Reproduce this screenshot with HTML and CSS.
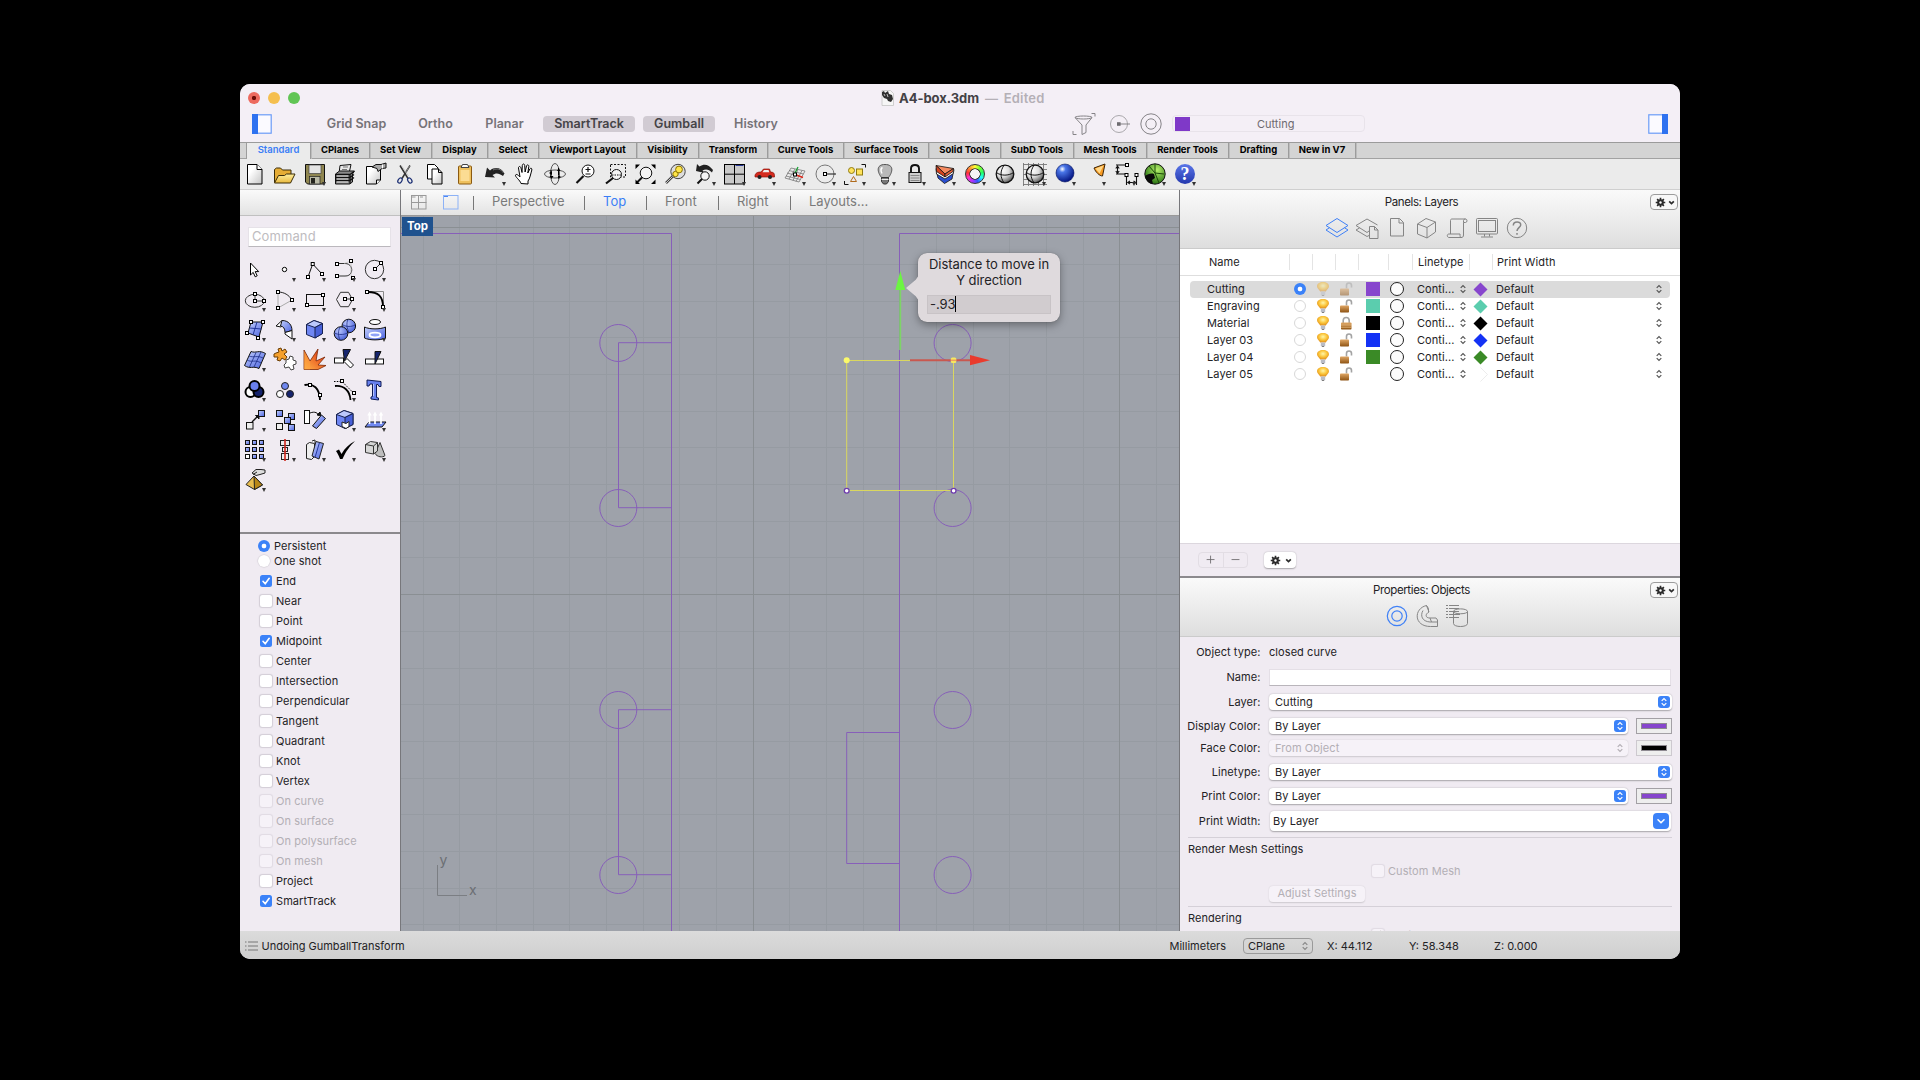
FILE: index.html
```html
<!DOCTYPE html>
<html lang="en">
<head>
<meta charset="utf-8">
<title>A4-box.3dm</title>
<link rel="stylesheet" href="styles.css">
</head>
<body>
<svg class="defs" width="0" height="0">
  <defs>
    <linearGradient id="paper" x1="0" y1="0" x2="1" y2="1"><stop offset="0.3" stop-color="#fff"/><stop offset="1" stop-color="#c4c4c4"/></linearGradient>
    <linearGradient id="blue" x1="0" y1="0" x2="1" y2="1"><stop offset="0" stop-color="#c3cffc"/><stop offset="1" stop-color="#4a62e0"/></linearGradient>
    <linearGradient id="gold" x1="0" y1="0" x2="0" y2="1"><stop offset="0" stop-color="#fff0a0"/><stop offset="1" stop-color="#e8b83c"/></linearGradient>
    <linearGradient id="fire" x1="1" y1="0" x2="0" y2="1"><stop offset="0.3" stop-color="#e8501c"/><stop offset="1" stop-color="#ffb54a"/></linearGradient>
    <linearGradient id="brass" x1="0" y1="0" x2="0" y2="1"><stop offset="0" stop-color="#e0a765"/><stop offset="1" stop-color="#8e5313"/></linearGradient>
    <radialGradient id="ball" cx="0.35" cy="0.3" r="0.75"><stop offset="0" stop-color="#fff"/><stop offset="0.5" stop-color="#ddd"/><stop offset="1" stop-color="#555"/></radialGradient>
    <radialGradient id="blueball" cx="0.35" cy="0.28" r="0.75"><stop offset="0" stop-color="#fff"/><stop offset="0.25" stop-color="#4a76e8"/><stop offset="1" stop-color="#02127e"/></radialGradient>
    <radialGradient id="softball" cx="0.35" cy="0.3" r="0.8"><stop offset="0" stop-color="#b9c6fb"/><stop offset="1" stop-color="#3e57d6"/></radialGradient>
    <radialGradient id="greenball" cx="0.6" cy="0.3" r="0.75"><stop offset="0" stop-color="#b4f06a"/><stop offset="1" stop-color="#1e6a0c"/></radialGradient>
    <radialGradient id="glow" cx="0.5" cy="0.4" r="0.6"><stop offset="0" stop-color="#fff6a8"/><stop offset="0.55" stop-color="#fbc53a"/><stop offset="1" stop-color="#e08e1c"/></radialGradient>
  </defs>
  <symbol id="h" viewBox="0 0 4 4" overflow="visible"><rect x="-1.5" y="-1.5" width="3" height="3" fill="#fff" stroke="#000"/></symbol>
  <symbol id="bulb" viewBox="0 0 14 16"><path d="M7 1c3.600 0 6 1.800 6 4.300 0 2.200-2.400 3.300-3.200 5.200H4.200C3.400 8.600 1 7.500 1 5.300 1 2.800 3.400 1 7 1z" fill="url(#glow)"/><rect x="4.800" y="10.500" width="4.400" height="3.600" fill="#b9bcc6"/><path d="M5.500 14.100h3l-.8 1h-1.400z" fill="#777"/></symbol>
  <symbol id="unlocked" viewBox="0 0 14 16"><path d="M7.500 7.500V4.500c0-3.300 5-3.300 5 0v2" fill="none" stroke="#a3a3a3" stroke-width="1.600"/><rect x="1" y="7.500" width="9" height="7" rx=".8" fill="url(#brass)"/></symbol>
  <symbol id="locked" viewBox="0 0 14 16"><path d="M4.200 8V5.500c0-4 6-4 6 0V8" fill="none" stroke="#a3a3a3" stroke-width="1.600"/><rect x="2" y="7.500" width="10.500" height="7" rx=".8" fill="url(#brass)"/><path d="M2 10h10.500M2 12.300h10.500" stroke="#f0c890" stroke-width=".6"/></symbol>
  <symbol id="updown" viewBox="0 0 8 10"><path d="M1.700 3.800 4 1.500l2.300 2.300M1.700 6.200 4 8.500l2.300-2.300" fill="none" stroke="currentColor" stroke-width="1.200"/></symbol>
  <symbol id="gear" viewBox="0 0 12 12"><path d="M6 .8v10.400M.8 6h10.400M2.300 2.300l7.400 7.400M9.700 2.300 2.300 9.700" stroke="#2b2b2b" stroke-width="1.800"/><circle cx="6" cy="6" r="2.600" fill="none" stroke="#2b2b2b" stroke-width="2"/><circle cx="6" cy="6" r="1.300" fill="#fff"/></symbol>
  <symbol id="chev" viewBox="0 0 6 6"><path d="M1 2l2 2 2-2" fill="none" stroke="#2b2b2b" stroke-width="1.400"/></symbol>
  <symbol id="tick" viewBox="0 0 12 12"><path d="M3 6.300 5.200 8.800 9.200 3.300" fill="none" stroke="#fff" stroke-width="1.600" stroke-linecap="round" stroke-linejoin="round"/></symbol>
</svg>

<main class="window">
  <header class="titlebar">
    <div class="lights"><i class="red"></i><i class="amber"></i><i class="green"></i></div>
    <div class="doc-title">
      <svg width="13" height="16" viewBox="0 0 13 16"><path d="M1 .5h8.500l3 3v12H1z" fill="#f6f6f6" stroke="#c4c4c4" stroke-width=".8"/><path d="M1 2l2-1 1 2 3-2 1 3 3 1 1 4-2 3-3-1-1-2-3-1-2-3z" fill="#303030"/><path d="M3 4l1 2M6 4l1 3" stroke="#ddd" stroke-width=".8"/></svg>
      <b>A4-box.3dm</b><span>— Edited</span>
    </div>
    <svg class="side-left" width="20" height="20" viewBox="0 0 20 20"><rect x=".8" y=".8" width="18.400" height="18.400" fill="#fbfaff" stroke="#6b9cf7" stroke-width="1.200"/><rect width="6" height="20" fill="#2f72f0"/></svg>
    <nav class="modes">
      <span class="grid-snap">Grid Snap</span><span class="ortho">Ortho</span><span class="planar">Planar</span><span class="smart on">SmartTrack</span><span class="gumball on">Gumball</span><span class="history">History</span>
    </nav>
    <div class="layer-tools">
      <svg width="24" height="23" viewBox="0 0 24 23" fill="none" stroke="#858387"><path d="M3 4.500c0-2 17-2 17 0l-6 7.500v7.500l-4 2v-9.500zM3 4.500c2 2 15 2 17 0"/><path d="M19.500.5h3.500v3M1 18v3.500h3.500"/></svg>
      <svg width="20" height="20" viewBox="0 0 20 20" fill="none" stroke="#aaa8ac"><circle cx="9" cy="10" r="8.500"/><path d="M10 10h10" stroke="#858387"/><rect x="7" y="8.200" width="3.600" height="3.600" fill="#6e6c70" stroke="none"/></svg>
      <svg width="22" height="22" viewBox="0 0 22 22" fill="none" stroke="#858387"><circle cx="11" cy="11" r="10.200"/><circle cx="11" cy="11" r="5.200"/></svg>
    </div>
    <div class="current-layer"><i></i><span>Cutting</span></div>
    <svg class="side-right" width="20" height="20" viewBox="0 0 20 20"><rect x=".8" y=".8" width="18.400" height="18.400" fill="#fbfaff" stroke="#6b9cf7" stroke-width="1.200"/><rect x="14" width="6" height="20" fill="#2f72f0"/></svg>
  </header>

  <nav class="tabs">
    <span class="active" style="width:65px">Standard</span><span style="width:59px">CPlanes</span><span style="width:62px">Set View</span><span style="width:56px">Display</span><span style="width:51px">Select</span><span style="width:98px">Viewport Layout</span><span style="width:62px">Visibility</span><span style="width:69px">Transform</span><span style="width:76px">Curve Tools</span><span style="width:85px">Surface Tools</span><span style="width:72px">Solid Tools</span><span style="width:73px">SubD Tools</span><span style="width:73px">Mesh Tools</span><span style="width:82px">Render Tools</span><span style="width:60px">Drafting</span><span style="width:67px">New in V7</span>
  </nav>

  <div class="toolbar">
    <i><svg viewBox="0 0 30 30"><path d="M7.500 5.500h9.500l5 5V25h-14.500z" fill="url(#paper)" stroke="#000"/><path d="M17 5.500v5h5" fill="#fff" stroke="#000"/></svg></i>
    <i><svg viewBox="0 0 30 30"><path d="M4.500 23.500V10.500l2-1.500h4l2 2h8.500v4" fill="#e6ad35" stroke="#3a2c08"/><path d="M4.500 24l4-7.500h6l2-1.500h8.500L20.500 24z" fill="url(#gold)" stroke="#3a2c08"/></svg></i>
    <i class="more"><svg viewBox="0 0 30 30"><path d="M5.500 5.500h19V25H7.500l-2-2z" fill="#8f8650" stroke="#111"/><rect x="9" y="6" width="12" height="8.500" fill="#e4e4e4" stroke="#444" stroke-width=".7"/><rect x="9.500" y="17.500" width="10.500" height="7.500" fill="#b9b9a6" stroke="#222" stroke-width=".7"/><rect x="11" y="19" width="4" height="5.500" fill="#23231d"/></svg></i>
    <i><svg viewBox="0 0 30 30"><path d="M10 6.500l11-1-2 9H9z" fill="#e8e8e8" stroke="#111"/><path d="M13 8h5M12 10.500h5" stroke="#777"/><path d="M5.500 15l4-3h15l-2 3v8l-3 2h-14z" fill="#8a8a8a" stroke="#111"/><path d="M5.500 15.500H20v9.500M5.500 18.500H20M5.500 21.500H20M20 15.500l4-3M20 18.500l4-3M20 21.500l4-3" fill="none" stroke="#111" stroke-width="1.300"/><path d="M7 17h11M7 20h11M7 23h11" stroke="#e2e2e2"/></svg></i>
    <i><svg viewBox="0 0 30 30"><path d="M6.500 7.500h14V21l-4 4h-10z" fill="url(#paper)" stroke="#000"/><path d="M16.500 25v-4h4" fill="#fff" stroke="#000"/><path d="M12 8l4-2.500h5L26 4v5l-4 .5-4 3-1-3z" fill="#aaa" stroke="#111"/><path d="M22.500 5.500v4" stroke="#fff"/></svg></i>
    <i><svg viewBox="0 0 30 30" fill="none"><path d="M10 6.500l8 13M20 6.500l-8 13" stroke="#333" stroke-width="1.500"/><path d="M18.500 17l-7-10.500M19.500 7l-4 7" stroke="#bbb" stroke-width=".6"/><ellipse cx="10" cy="21.500" rx="1.800" ry="2.800" transform="rotate(35 10 21.500)" stroke="#1c2f74" stroke-width="1.200"/><ellipse cx="19.800" cy="21.500" rx="1.800" ry="2.800" transform="rotate(-35 19.800 21.500)" stroke="#1c2f74" stroke-width="1.200"/></svg></i>
    <i><svg viewBox="0 0 30 30" stroke="#000"><path d="M7.500 5.500h7l3.500 3.500V20h-10.500z" fill="#fff"/><path d="M12 10h6.500l3.500 3.500V25H12z" fill="url(#paper)"/><path d="M18.500 10v3.500h3.500" fill="none"/></svg></i>
    <i><svg viewBox="0 0 30 30"><rect x="8.500" y="7" width="13" height="18" rx="1" fill="#eec05d" stroke="#8a5a12"/><path d="M11 8.500l1.500-3h5l1.500 3z" fill="#f8f8f8" stroke="#444"/><path d="M10.500 11h9v11h-9z" fill="#fbdc93"/></svg></i>
    <i class="more"><svg viewBox="0 0 30 30"><path d="M5 18l2-9.500 3 3c5-4 11-3 14.500 3l-1.500 2.500c-4-3-7-3.500-10.500-1l2.500 2.500z" fill="#222"/><path d="M13 11c4-2 8-1 10.500 3" fill="none" stroke="#777"/></svg></i>
    <i><svg viewBox="0 0 30 30"><path d="M11 24.500c-1-3.500-6-6.500-5.500-8.500 1-1.500 3 .5 4.500 2L8.500 9c0-2 2-2 2.500 0l1 4.500.3-7c.2-2 2.200-2 2.400 0l.4 6.500 1.400-6c.6-1.800 2.500-1.200 2.300.6l-1 6.400 2-4c1-1.500 2.500-.6 2 1-1 3.500-2 9-3.800 11v3z" fill="#fff" stroke="#000"/></svg></i>
    <i><svg viewBox="0 0 30 30" fill="none" stroke="#555"><ellipse cx="15" cy="15" rx="10.500" ry="4"/><ellipse cx="15" cy="15" rx="4.500" ry="10.500"/><path d="M11 11v7M18.500 9v7" stroke="#000"/><path d="M9.500 17h4l-2 3zM17 12l1.700-3 1.700 3zM12 12l-3 2 3 2zM18 16l3 2-3 2z" fill="#000" stroke="none"/></svg></i>
    <i><svg viewBox="0 0 30 30" fill="none" stroke="#111"><path d="M13.500 17l-7 7" stroke-width="2.200"/><circle cx="18" cy="12" r="6" fill="#fff"/><path d="M18 8v5M15.500 10.500h5M15.500 15h5" stroke-width="1.200"/></svg></i>
    <i><svg viewBox="0 0 30 30" fill="none" stroke="#111"><rect x="10.500" y="5.500" width="15" height="12.500" stroke-dasharray="2 1.500"/><path d="M13 19l-7 5.500" stroke-width="2.200"/><circle cx="16.500" cy="15.500" r="5" fill="#f4f4f4"/><path d="M12 16h9" stroke-dasharray="1.500 1"/></svg></i>
    <i><svg viewBox="0 0 30 30" fill="none" stroke="#111"><path d="M12 18.500l-5.500 5.500" stroke-width="2"/><circle cx="16" cy="14" r="5.800" fill="#f4f4f4"/><path d="M5.500 10V5.500H10zM21 5.500h4.500V10zM25.500 20.500V25H21zM5.500 20.500V25H10z" fill="#000" stroke="none"/></svg></i>
    <i><svg viewBox="0 0 30 30" fill="none" stroke="#444"><path d="M13 17l-7 7" stroke-width="2.500"/><path d="M13 17l-7 7" stroke="#c8c8c8"/><circle cx="18" cy="12.500" r="7.200" fill="#ddd"/><circle cx="15.500" cy="15" r="2.700" fill="#ffe64a" stroke="#8a7300"/><circle cx="19" cy="10.500" r="3.400" fill="#ffe64a" stroke="#8a7300"/></svg></i>
    <i class="more"><svg viewBox="0 0 30 30" fill="none" stroke="#111"><path d="M6 12l1-7 2.500 2.500c5-3 9-2 13.500 3.500l-1 2.500c-3-3-6-4-9.500-2l2 2.500z" fill="#222" stroke="none"/><path d="M12 20l-4.500 4.500" stroke-width="2"/><circle cx="15" cy="17" r="4.200" fill="#f4f4f4"/></svg></i>
    <i class="more"><svg viewBox="0 0 30 30"><rect x="4.500" y="5.500" width="20" height="19.500" fill="#c9c9c9" stroke="#000"/><path d="M14.500 5.500V25M4.500 15.200h20" stroke="#000"/><path d="M15.500 6.500h8" stroke="#2a3a9a"/></svg></i>
    <i class="more"><svg viewBox="0 0 30 30"><path d="M5 16c1-2.500 3-3 6-3l2.500-3h6l1 3c3 .2 4 1 4 4v1H5z" fill="#d52b1e" stroke="#8c120a" stroke-width=".7"/><path d="M14 11h4.500l.8 2.200H12.500z" fill="#eee"/><circle cx="9.500" cy="18" r="2" fill="#222"/><circle cx="20" cy="18" r="2" fill="#222"/></svg></i>
    <i class="more"><svg viewBox="0 0 30 30" fill="none" stroke="#777"><path d="M11 9l14 3-6 11-14-4zM9 11.500l14.500 3.500M7 14l15 4M6 17l14.500 3.500M15 10l-6 10M18 10.500 13 21.500M22 11.500l-6 11" stroke-width=".8"/><path d="M15 14l3-6" stroke="#18a032" stroke-width="1.300"/><path d="M15 15.500l8 3" stroke="#e02a1c" stroke-width="1.600"/><use href="#h" x="15" y="15.500" width="4" height="4"/></svg></i>
    <i class="more"><svg viewBox="0 0 30 30" fill="none" stroke="#777"><circle cx="15" cy="15" r="9"/><path d="M15 15h11" stroke="#111"/><use href="#h" x="15" y="15" width="4" height="4"/></svg></i>
    <i class="more"><svg viewBox="0 0 30 30" fill="none" stroke="#111"><circle cx="11.500" cy="11.500" r="3" fill="#ffe35c" stroke="#8f7a10"/><rect x="16.500" y="10" width="6" height="6" fill="#ffe35c" stroke="#8f7a10"/><path d="M13.500 17.500l3 5h-6z" stroke="#b06a1c"/><path d="M21.500 5.500h4v3M4.500 22v3.500h4"/></svg></i>
    <i class="more"><svg viewBox="0 0 30 30"><path d="M15 5.500c9.500 0 7.500 8 3.500 13h-7c-4-5-6-13 3.500-13z" fill="#b9b9b9" stroke="#555"/><path d="M12.500 8.500c-2 1-1.500 4-.5 6" fill="none" stroke="#fff" stroke-width="1.500"/><path d="M11.500 18.500h7v4l-2 2.500h-3l-2-2.500z" fill="#777" stroke="#333"/><path d="M11.500 20.500h7" stroke="#eee"/></svg></i>
    <i class="more"><svg viewBox="0 0 30 30"><path d="M11 14V9.500c0-4.600 8-4.600 8 0V14" fill="none" stroke="#111" stroke-width="1.900"/><rect x="9" y="13.500" width="12" height="10" fill="#cfcfcf" stroke="#111"/><path d="M10.500 16.500h9M10.500 19h9M10.500 21.500h9" stroke="#888"/></svg></i>
    <i class="more"><svg viewBox="0 0 30 30" stroke="#111" stroke-width=".8"><path d="M6.500 12.500l8.500 6.500 8.500-6.500-1.500 7.500-7.500 4.500-6.500-5.500z" fill="#2a4fd0"/><path d="M6 9.500l9 6 9-5-.7 4L15 20l-8.500-5z" fill="#fff"/><path d="M6 6.500 23.500 9.500 15 15z" fill="#f58a60"/><path d="M6 6.500l9 8.500v3l-8.500-5.500z" fill="#d8431f"/><path d="M15 15l8.500-5.500-.5 3-8 5.500z" fill="#e5603a"/></svg></i>
    <i class="more wheel"><b></b></i>
    <i><svg viewBox="0 0 30 30" fill="none" stroke="#111"><circle cx="15" cy="15" r="8.800" fill="url(#ball)" stroke-width="1.300"/><path d="M14 6.200c-4 6-4 12 0 17.600M6.300 13.500c5 3.500 12 3.500 17.400 0"/></svg></i>
    <i class="more"><svg viewBox="0 0 30 30" fill="none" stroke="#111"><path d="M3.500 4v23M8.500 4v23M13.500 4v23M18.500 4v23M23.500 4v23M3 5.500h24M3 10.500h24M3 15.500h24M3 20.500h24M3 25.500h24" stroke="#777" stroke-width=".9"/><circle cx="15" cy="15" r="8.800" fill="url(#ball)" stroke-width="1.300"/><path d="M14 6.200c-4 6-4 12 0 17.600M6.300 13.500c5 3.500 12 3.500 17.400 0"/></svg></i>
    <i class="more"><svg viewBox="0 0 30 30"><circle cx="15" cy="14" r="9" fill="url(#blueball)" stroke="#001060" stroke-width=".6"/></svg></i>
    <i class="more"><svg viewBox="0 0 30 30"><path d="M14 9l11-4-2.500 12c-3 0-7-4-8.500-8z" fill="#f79a23" stroke="#3c2404"/><path d="M15.500 9.500l8-3-4 8z" fill="#ffd98a"/></svg></i>
    <i class="more"><svg viewBox="0 0 30 30" fill="none" stroke="#111"><path d="M6 6h10M6 15h9M7.500 7.500v6M5.800 9.500 7.500 7.200l1.700 2.300M5.800 12l1.700 2.300L9.200 12M16.500 18v8M26.500 17v9M18 23.500h7M20 22l-2.200 1.500L20 25M23.500 22l2.200 1.500-2.200 1.500" stroke-width="1.100"/><use href="#h" x="17" y="6" width="4" height="4"/><use href="#h" x="16.500" y="16" width="4" height="4"/><use href="#h" x="26.500" y="16" width="4" height="4"/></svg></i>
    <i class="more"><svg viewBox="0 0 30 30"><circle cx="15" cy="15" r="10.200" fill="url(#greenball)" stroke="#111"/><path d="M15 5v9l9 1M15 14l-6-7M15 14l4 10" fill="none" stroke="#1c4a0a"/><path d="M5 17c3-2 6-3 9-2l1 4-3 2 1 4c-4 0-7-3-8-8z" fill="#0a0a0a"/></svg></i>
    <i class="more help"><b>?</b></i>
  </div>

  <div class="body">
    <aside class="left">
      <div class="strip"></div>
      <div class="palette">
        <div class="command">Command</div>
        <div class="tools">
          <i><svg viewBox="0 0 30 30"><path d="M10.500 8v12l2.700-2.600 2 4.400 2-1-2-4.200h3.500z" fill="#fff" stroke="#000"/></svg></i>
          <i class="more"><svg viewBox="0 0 30 30"><circle cx="14.500" cy="14.500" r="2.200" fill="#fff" stroke="#000"/></svg></i>
          <i class="more"><svg viewBox="0 0 30 30" fill="none" stroke="#111"><path d="M8 22l4.700-13L22 19"/><use href="#h" x="8" y="22" width="4" height="4"/><use href="#h" x="12.700" y="9" width="4" height="4"/><use href="#h" x="22" y="19" width="4" height="4"/></svg></i>
          <i class="more"><svg viewBox="0 0 30 30" fill="none" stroke="#333"><path d="M7 8.500h8c9 0 9 13 0 12.500H7"/><path d="M14 8.500l7-2.500v14l2 3" stroke="#bbb" stroke-width=".7"/><use href="#h" x="7" y="9" width="4" height="4"/><use href="#h" x="21" y="6" width="4" height="4"/><use href="#h" x="7" y="21" width="4" height="4"/><use href="#h" x="23" y="23" width="4" height="4"/></svg></i>
          <i class="more"><svg viewBox="0 0 30 30" fill="none" stroke="#333"><circle cx="14.500" cy="14.500" r="9.200"/><path d="M15 14l6-6"/><use href="#h" x="15" y="14" width="4" height="4"/><use href="#h" x="21" y="8" width="4" height="4"/></svg></i>

          <i class="more"><svg viewBox="0 0 30 30" fill="none" stroke="#333"><ellipse cx="14.800" cy="15.800" rx="9.500" ry="6.500"/><path d="M15 9v7h9"/><use href="#h" x="15" y="9" width="4" height="4"/><use href="#h" x="15" y="16" width="4" height="4"/><use href="#h" x="24" y="16" width="4" height="4"/></svg></i>
          <i class="more"><svg viewBox="0 0 30 30" fill="none"><path d="M8 7v16l14-8" stroke="#aaa"/><path d="M8 7c6 0 11 3 14 8" stroke="#222"/><use href="#h" x="8" y="7" width="4" height="4"/><use href="#h" x="8" y="23" width="4" height="4"/><use href="#h" x="22" y="15" width="4" height="4"/></svg></i>
          <i class="more"><svg viewBox="0 0 30 30" fill="none" stroke="#111"><rect x="6.500" y="9.500" width="17" height="11"/><use href="#h" x="7" y="20" width="4" height="4"/><use href="#h" x="23" y="10" width="4" height="4"/></svg></i>
          <i class="more"><svg viewBox="0 0 30 30" fill="none" stroke="#333"><path d="M6.500 14.500l4-7.200h8l4 7.200-4 7.200h-8zM15 14h7"/><use href="#h" x="15" y="14" width="4" height="4"/><use href="#h" x="22" y="14" width="4" height="4"/></svg></i>
          <i class="more"><svg viewBox="0 0 30 30" fill="none"><path d="M8 6.500h15.500V22" stroke="#888"/><path d="M8 7c10 0 15 4 15 15" stroke="#000" stroke-width="1.800"/><use href="#h" x="7" y="7" width="4" height="4"/><use href="#h" x="23" y="22" width="4" height="4"/></svg></i>

          <i class="more"><svg viewBox="0 0 30 30" stroke="#111"><path d="M11 7h12l-4 15-11-4z" fill="url(#blue)"/><path d="M17 7l-4 13M9.500 13l12 1" fill="none" stroke="#23379a"/><use href="#h" x="11" y="7" width="4" height="4"/><use href="#h" x="23" y="7" width="4" height="4"/><use href="#h" x="7" y="18" width="4" height="4"/><use href="#h" x="18" y="23" width="4" height="4"/></svg></i>
          <i class="more"><svg viewBox="0 0 30 30" stroke="#111"><path d="M6 11l6-5.500 4.500 1.500L11 12z" fill="#fff"/><path d="M12 5.500c7 0 10 5 10 10l-7 2c0-4-1.500-6-4.500-6.500z" fill="url(#blue)"/><path d="M15 17.500l7-2v8.500l-7-5z" fill="#fff"/></svg></i>
          <i class="more"><svg viewBox="0 0 30 30" stroke="#182250"><path d="M6.500 9.500 14 5.500l8.500 3v10L15 23l-8.500-3.500z" fill="#6f86f2"/><path d="M6.500 9.500l8.500 3 7.500-4L14 5.500z" fill="#bcc8fc"/><path d="M15 12.500V23l7.500-4.500v-10z" fill="#4860d8"/></svg></i>
          <i class="more"><svg viewBox="0 0 30 30" stroke="#111"><circle cx="18.800" cy="11" r="6.800" fill="url(#softball)"/><circle cx="11" cy="18.500" r="6.800" fill="url(#softball)"/><path d="M10 12c-2 4-2 9 0 13M4.500 18c4 2 9 2 13 0M18 4.500c-2 4-1 9 1 13M13 10c4 2 8 2 12 0" fill="none" stroke="#1e2f88" stroke-width=".8"/></svg></i>
          <i class="more"><svg viewBox="0 0 30 30" stroke="#111"><ellipse cx="15" cy="7" rx="5.500" ry="2.500" fill="#fff"/><path d="M4.500 12c5 2.500 16 2.500 21 0v11c-5 2.500-16 2.500-21 0z" fill="url(#blue)"/><ellipse cx="15" cy="20" rx="5.500" ry="2.300" fill="#8fa2f8" stroke="#fff" stroke-width="1.800"/></svg></i>

          <i class="more"><svg viewBox="0 0 30 30" stroke="#111"><path d="M11 6.500c5 2 8-2 14.500 2L19 23.500c-6-3-9 1-14.500-3z" fill="url(#blue)"/><path d="M16 7.500 9.500 22M21 7l-7 15M9 11c5 2 8-1 14 2M7 15c5 3 8-1 14 3" fill="none" stroke="#1b2c86" stroke-width=".8"/></svg></i>
          <i><svg viewBox="0 0 30 30" stroke="#6a3d05"><path d="M6 8l3-1-1-3 3-1 1 3 3-2 2 3-3 2 3 3-2 3-3-2-2 3-3-1 1-3-4 0v-3z" fill="#f5a02d"/><path d="M16 15l3-1 1-3 3 1v3l3 1v3l-3 1 1 4-3 1-2-3-4 1-1-3 2-2z" fill="#fff" stroke="#444"/></svg></i>
          <i><svg viewBox="0 0 30 30"><path d="M4 24.500V5l6 11 8-12-2 12 9-4-7 8 8 .5-8 4z" fill="url(#fire)" stroke="#7a2605" stroke-width=".8"/><path d="M4 24.500V6l6 11v7.500z" fill="#ffa640" opacity=".5"/></svg></i>
          <i><svg viewBox="0 0 30 30" stroke="#111"><rect x="4.500" y="13" width="9" height="5" fill="#fff"/><path d="M13 4.500h7.500L14.500 16z" fill="#16246e"/><path d="M14 16.500l3-3 6.500 6.500-3 3z" fill="#fff"/></svg></i>
          <i><svg viewBox="0 0 30 30" stroke="#111"><rect x="5.500" y="14" width="18" height="5" fill="#fff"/><path d="M15 6.500h6L15 19z" fill="#16246e"/></svg></i>

          <i class="more"><svg viewBox="0 0 30 30" stroke="#000" stroke-width="2"><circle cx="10.500" cy="17" r="5" fill="#fff"/><circle cx="18.500" cy="17" r="5" fill="#16246e"/><circle cx="14.500" cy="11" r="5" fill="#6a80ee"/></svg></i>
          <i><svg viewBox="0 0 30 30" stroke="#222"><circle cx="15" cy="11" r="3.500" fill="#7088f0"/><circle cx="10" cy="19" r="3.500" fill="#fff"/><circle cx="20" cy="19" r="3.500" fill="#16246e"/></svg></i>
          <i><svg viewBox="0 0 30 30" fill="none" stroke="#000" stroke-width="1.800"><path d="M4.500 10c9-2 15 3 15.500 15"/><use href="#h" x="10" y="10" width="4" height="4" stroke-width="1"/><use href="#h" x="20" y="20" width="4" height="4" stroke-width="1"/></svg></i>
          <i class="more"><svg viewBox="0 0 30 30" fill="none" stroke="#000"><path d="M5 11c9-1 15 5 15.500 14" stroke-width="1.800"/><path d="M4 6.500h8l11 11" stroke-dasharray="1.500 1.300"/><use href="#h" x="12" y="6" width="4" height="4"/><use href="#h" x="24" y="18" width="4" height="4"/></svg></i>
          <i><svg viewBox="0 0 30 30"><path d="M7 5l14 1.500v5h-2l-1-2h-1.500v13l2 .5v2L11 24v-2l1.500-.5V9H10l-1 2H7z" fill="#6780ee" stroke="#0e1a55"/><path d="M13.500 9v12" stroke="#b9c6fc"/></svg></i>

          <i class="more"><svg viewBox="0 0 30 30" stroke="#111"><path d="M12 17l6-6" stroke-width="1.300"/><path d="M15.500 10.500h3.500V14z" fill="#111"/><rect x="6.500" y="17.500" width="6.500" height="6.500" fill="#eee"/><rect x="18.500" y="5.500" width="6" height="6" fill="url(#blue)"/></svg></i>
          <i><svg viewBox="0 0 30 30" stroke="#111"><rect x="6.500" y="5.500" width="6" height="6" fill="url(#blue)"/><rect x="18.500" y="8.500" width="6" height="6" fill="url(#blue)"/><rect x="14.500" y="12.500" width="6" height="6" fill="url(#blue)"/><rect x="6.500" y="18.500" width="6" height="6" fill="#eee"/><rect x="18.500" y="19.500" width="6" height="6" fill="url(#blue)"/></svg></i>
          <i><svg viewBox="0 0 30 30" stroke="#111"><rect x="4.500" y="5.500" width="5" height="13" fill="#fff"/><path d="M10 8c5-2 8 0 9 3" fill="none"/><path d="M17 10l4 .5-1-3.500z" fill="#111"/><path d="M12.500 21l9-11 4 3.500-9 10z" fill="url(#blue)"/></svg></i>
          <i class="more"><svg viewBox="0 0 30 30" stroke="#182250"><path d="M6.500 9.500 14 5.500l9 3v11L15 23.500l-8.500-4z" fill="#6f86f2"/><path d="M6.500 9.500l8.500 3 8-4-9-3z" fill="#bcc8fc"/><path d="M15 12.500v11l8-4v-11z" fill="#4860d8"/><path d="M12 17l4 1.500 3-2v5l-3 2-4-2z" fill="#fff" stroke="#222"/></svg></i>
          <i class="more"><svg viewBox="0 0 30 30"><path d="M9 17h17l-4 5H5z" fill="#7088f0" stroke="#111"/><path d="M9.500 19V9M15 19V9M21 19V9" stroke="#fff" stroke-width="1.700"/><path d="M7.300 10.500 9.500 6.500l2.200 4zM12.800 10.500 15 6.500l2.200 4zM18.800 10.500 21 6.500l2.200 4z" fill="#fff"/></svg></i>

          <i class="more"><svg viewBox="0 0 30 30" stroke="#111" fill="url(#blue)"><rect x="5.500" y="5.500" width="4" height="4"/><rect x="12.500" y="5.500" width="4" height="4"/><rect x="19.500" y="5.500" width="4" height="4"/><rect x="5.500" y="12.500" width="4" height="4"/><rect x="12.500" y="12.500" width="4" height="4"/><rect x="19.500" y="12.500" width="4" height="4"/><rect x="5.500" y="19.500" width="4" height="4" fill="#fff"/><rect x="12.500" y="19.500" width="4" height="4"/><rect x="19.500" y="19.500" width="4" height="4"/></svg></i>
          <i class="more"><svg viewBox="0 0 30 30" stroke="#222" fill="#eee"><rect x="10.500" y="5.500" width="9" height="5"/><rect x="12.500" y="12.500" width="5" height="4"/><rect x="11.500" y="18.500" width="7" height="6"/><path d="M15 4v22" stroke="#d0281c" stroke-width="1.600"/></svg></i>
          <i class="more"><svg viewBox="0 0 30 30" stroke="#222"><path d="M6.500 9.500l3-2 5 1v13l-3 3-5-1z" fill="#eee"/><path d="M12 6l3-1v3" fill="#fff"/><path d="M16 6.500l7.500 2L19 24l-7-3z" fill="url(#blue)"/><path d="M19.500 7.500 15 22.500" stroke="#24389c"/></svg></i>
          <i class="more"><svg viewBox="0 0 30 30"><path d="M6 16l3-1.500 2.500 4.500C15 13 19 9 25 6c-5 5-9 10-12.500 18H10C9 21 7.500 18 6 16z" fill="#000"/></svg></i>
          <i class="more"><svg viewBox="0 0 30 30" stroke="#333"><path d="M20 7.500l5 13c-2 2.500-8 1.500-10-2z" fill="#bdbdbd"/><path d="M5.500 9.500l5-3 7 1v8.500l-4 3-8-1.500z" fill="#d6d6d6"/><path d="M5.500 9.500l8 1.500 4-3.500M13.500 11v8" fill="none"/></svg></i>

          <i class="more"><svg viewBox="0 0 30 30" stroke="#222"><path d="M6 19.500l8-8.500 8.500 9-8 4.500z" fill="#e9bd4f"/><path d="M14 11l.5 13.500 8-4.500z" fill="#b98718"/><path d="M12 8l4-3.500h5l4 .5v3l-5 1.500-4 1z" fill="#ddd"/><path d="M13 9.500l4-2.500" /></svg></i>
        </div>
      </div>
      <div class="snaps">
        <div class="radio"><i class="on"></i>Persistent</div>
        <div class="radio"><i></i>One shot</div>
        <div class="check first"><i class="on"><svg><use href="#tick"/></svg></i>End</div>
        <div class="check"><i></i>Near</div>
        <div class="check"><i></i>Point</div>
        <div class="check"><i class="on"><svg><use href="#tick"/></svg></i>Midpoint</div>
        <div class="check"><i></i>Center</div>
        <div class="check"><i></i>Intersection</div>
        <div class="check"><i></i>Perpendicular</div>
        <div class="check"><i></i>Tangent</div>
        <div class="check"><i></i>Quadrant</div>
        <div class="check"><i></i>Knot</div>
        <div class="check"><i></i>Vertex</div>
        <div class="check off"><i></i>On curve</div>
        <div class="check off"><i></i>On surface</div>
        <div class="check off"><i></i>On polysurface</div>
        <div class="check off"><i></i>On mesh</div>
        <div class="check"><i></i>Project</div>
        <div class="check"><i class="on"><svg><use href="#tick"/></svg></i>SmartTrack</div>
      </div>
    </aside>

    <section class="center">
      <nav class="views">
        <svg width="16" height="15" viewBox="0 0 16 15" fill="none" stroke="#9a9a9a"><rect x=".5" y=".5" width="14.500" height="13.500"/><path d="M7.500 0v14M.5 7.500h15M.5 2h4M9 2h3"/></svg>
        <svg class="single" width="16" height="15" viewBox="0 0 16 15" fill="none" stroke="#8db2f6"><rect x=".5" y=".5" width="14.500" height="13.500"/><path d="M1 1.500h4" stroke="#4b86f5"/></svg>
        <span class="v1">Perspective</span><span class="v2 sel">Top</span><span class="v3">Front</span><span class="v4">Right</span><span class="v5">Layouts...</span>
      </nav>
      <div class="viewport">
        <svg class="scene" width="778" height="715" viewBox="401 216 778 715" fill="none">
          <path stroke="#969ba2" d="M423.500 216v715M459.500 216v715M496.500 216v715M533.500 216v715M569.500 216v715M606.500 216v715M643.500 216v715M679.500 216v715M716.500 216v715M789.500 216v715M826.500 216v715M863.500 216v715M936.500 216v715M973.500 216v715M1009.500 216v715M1046.500 216v715M1083.500 216v715M1156.500 216v715M401 264.500h778M401 301.500h778M401 337.500h778M401 374.500h778M401 411.500h778M401 447.500h778M401 484.500h778M401 521.500h778M401 557.500h778M401 631.500h778M401 668.500h778M401 704.500h778M401 741.500h778M401 778.500h778M401 814.500h778M401 851.500h778M401 888.500h778M401 924.500h778"/>
          <path stroke="#8a8f93" d="M753.500 216v715M1119.500 216v715M401 227.500h778M401 594.500h778"/>
          <g stroke="#875fb9">
            <path d="M401 233.500h270.500V931M1179 233.500H899.500V931M671 342.700h-52.500v165H671M671 709.700h-52.500v165H671M899.500 732.500h-52.800v131h52.800"/>
            <circle cx="618.300" cy="343" r="18.500"/><circle cx="618.300" cy="508" r="18.500"/><circle cx="618.300" cy="710" r="18.500"/><circle cx="618.300" cy="875" r="18.500"/>
            <circle cx="952.600" cy="343" r="18.500"/><circle cx="952.600" cy="508" r="18.500"/><circle cx="952.600" cy="710" r="18.500"/><circle cx="952.600" cy="875" r="18.500"/>
          </g>
          <rect x="846.700" y="360.500" width="106.800" height="130" stroke="#dad75f"/>
          <path d="M900.200 350v-61" stroke="#7fd468" stroke-width="2"/><path d="M895.300 290l5-19 5 19z" fill="#6cf542"/>
          <path d="M910 360.300h61" stroke="#c9584f" stroke-width="2"/><path d="M970 355l20 5.300-20 5z" fill="#ea3b2d"/>
          <circle cx="846.700" cy="360.300" r="3" fill="#fbf96a"/><rect x="950.800" y="357.500" width="5.500" height="5.500" rx="1.500" fill="#f6e860"/><path d="M951 360.300h5" stroke="#f0a05c" stroke-width="1.500"/>
          <g fill="#fff" stroke="#6f3cae" stroke-width="1.300"><circle cx="846.700" cy="490.800" r="2.400"/><circle cx="953.600" cy="490.800" r="2.400"/></g>
          <path d="M437.500 865v30.500H467" stroke="#7b7e83"/>
          <g class="axis"><text x="439.500" y="864.500">y</text><text x="469" y="895">x</text></g>
        </svg>
        <div class="view-name">Top</div>
        <div class="popover">
          <p>Distance to move in<br>Y direction</p>
          <div class="value">-.93</div>
        </div>
      </div>
    </section>

    <aside class="right">
      <div class="panel-head">
        <h2>Panels: Layers</h2>
        <span class="gear-btn"><svg class="g"><use href="#gear"/></svg><svg class="c"><use href="#chev"/></svg></span>
        <div class="panel-icons">
          <svg viewBox="0 0 24 24" stroke="#3f80f6"><path d="M1 9.500 12 2.500l11 7-11 7zM4.500 11.700 1 14l11 7 11-7-3.500-2.300"/></svg>
          <svg viewBox="0 0 24 24"><path d="M14 15l-2 1.500-11-7 11-6.500 10.500 6M4.500 12 1 14l11 6.500 2-1M14.500 10.500h5l3.500 3.500v8.500h-8.500zM19.500 10.500V14H23"/></svg>
          <svg viewBox="0 0 24 24"><path d="M5.500 2.500h9l4 4v13.500h-13zM14 2.500V7h4.500"/></svg>
          <svg viewBox="0 0 24 24"><path d="M2.500 8 11 2.500 20.500 6v10l-8.500 6-9.500-4zM2.500 8l9.500 3.500L20.500 6M12 11.500V22"/></svg>
          <svg viewBox="0 0 24 24"><path d="M5.500 18V4.500c0-1 .5-1.500 1.500-1.500h13.500c2 0 2 3.500 0 3.500h-2V19c0 2-1 2.500-2.500 2.500H4c-2 0-2.500-3.500 0-3.500h11c0 2 0 3.500 1.500 3.500M18.500 6.500V4.500c0-1 1-1.500 2-1.500"/></svg>
          <svg viewBox="0 0 24 24"><rect x="1.500" y="2.500" width="21" height="15.500" rx="1"/><rect x="3.500" y="4.500" width="17" height="11"/><path d="M9.500 18v2.500M14.500 18v2.500M6 21h12"/></svg>
          <svg viewBox="0 0 24 24"><circle cx="12" cy="12" r="9.700"/><path d="M8.300 9.500c0-5 7.700-4.500 7.400-.5-.2 2.500-3.700 3-3.700 6M12 17v1.800" stroke-width="1.500"/></svg>
        </div>
      </div>
      <div class="layers">
        <div class="cols">
          <span class="c-name">Name</span><span></span><span></span><span></span><span class="w30"></span><span class="w24"></span><span class="w57">Linetype</span><span></span><span class="last">Print Width</span>
        </div>
        <div class="rows">
          <div class="lrow cur"><span class="n">Cutting</span><i class="dot on"></i><svg class="ic"><use href="#bulb"/></svg><svg class="ic lk"><use href="#unlocked"/></svg><i class="sw" style="background:#8746cd"></i><i class="ring"></i><span class="lt">Conti...</span><svg class="ud"><use href="#updown"/></svg><svg class="dia" viewBox="0 0 16 16"><path d="M8 .5 15.500 8 8 15.500.5 8z" fill="#8746cd"/></svg><span class="pw">Default</span><svg class="ud"><use href="#updown"/></svg></div>
          <div class="lrow"><span class="n">Engraving</span><i class="dot"></i><svg class="ic"><use href="#bulb"/></svg><svg class="ic lk"><use href="#unlocked"/></svg><i class="sw" style="background:#5bcdae"></i><i class="ring"></i><span class="lt">Conti...</span><svg class="ud"><use href="#updown"/></svg><svg class="dia" viewBox="0 0 16 16"><path d="M8 .5 15.500 8 8 15.500.5 8z" fill="#5bcdae"/></svg><span class="pw">Default</span><svg class="ud"><use href="#updown"/></svg></div>
          <div class="lrow"><span class="n">Material</span><i class="dot"></i><svg class="ic"><use href="#bulb"/></svg><svg class="ic lk"><use href="#locked"/></svg><i class="sw" style="background:#000"></i><i class="ring"></i><span class="lt">Conti...</span><svg class="ud"><use href="#updown"/></svg><svg class="dia" viewBox="0 0 16 16"><path d="M8 .5 15.500 8 8 15.500.5 8z" fill="#000"/></svg><span class="pw">Default</span><svg class="ud"><use href="#updown"/></svg></div>
          <div class="lrow"><span class="n">Layer 03</span><i class="dot"></i><svg class="ic"><use href="#bulb"/></svg><svg class="ic lk"><use href="#unlocked"/></svg><i class="sw" style="background:#1432f5"></i><i class="ring"></i><span class="lt">Conti...</span><svg class="ud"><use href="#updown"/></svg><svg class="dia" viewBox="0 0 16 16"><path d="M8 .5 15.500 8 8 15.500.5 8z" fill="#1432f5"/></svg><span class="pw">Default</span><svg class="ud"><use href="#updown"/></svg></div>
          <div class="lrow"><span class="n">Layer 04</span><i class="dot"></i><svg class="ic"><use href="#bulb"/></svg><svg class="ic lk"><use href="#unlocked"/></svg><i class="sw" style="background:#3a8a26"></i><i class="ring"></i><span class="lt">Conti...</span><svg class="ud"><use href="#updown"/></svg><svg class="dia" viewBox="0 0 16 16"><path d="M8 .5 15.500 8 8 15.500.5 8z" fill="#3a8a26"/></svg><span class="pw">Default</span><svg class="ud"><use href="#updown"/></svg></div>
          <div class="lrow"><span class="n">Layer 05</span><i class="dot"></i><svg class="ic"><use href="#bulb"/></svg><svg class="ic lk"><use href="#unlocked"/></svg><i class="sw" style="background:#fff"></i><i class="ring"></i><span class="lt">Conti...</span><svg class="ud"><use href="#updown"/></svg><svg class="dia" viewBox="0 0 16 16"><path d="M8 .5 15.500 8 8 15.500" fill="none" stroke="#e6e6e6" stroke-width=".8"/></svg><span class="pw">Default</span><svg class="ud"><use href="#updown"/></svg></div>
        </div>
      </div>
      <div class="layer-actions">
        <div class="pm"><svg viewBox="0 0 25 16"><path d="M7.500 7.500h9M12 3v9" stroke="#6b696d"/></svg><svg viewBox="0 0 25 16"><path d="M8 7.500h9" stroke="#6b696d"/></svg></div>
        <span class="pop-btn"><svg class="g"><use href="#gear"/></svg><svg class="c"><use href="#chev"/></svg></span>
      </div>
      <div class="panel-head props-head">
        <h2>Properties: Objects</h2>
        <span class="gear-btn"><svg class="g"><use href="#gear"/></svg><svg class="c"><use href="#chev"/></svg></span>
        <div class="panel-icons three">
          <svg viewBox="0 0 24 24" stroke="#3f80f6" stroke-width="1.200"><circle cx="12" cy="12" r="9.700"/><circle cx="12" cy="12" r="5.200"/></svg>
          <svg viewBox="0 0 24 24"><path d="M11.500 1.500c-13 3-13 21 4 21h7v-6.500l-1.500-2h-6c-5 0-5-4-1-6zM13.500 8V4.500l-2-3M8 6.500c-3 5-1 11 7 11.500h7M15 14l1.500 4" /></svg>
          <svg viewBox="0 0 24 24"><path d="M1 1.500h2M4 1.500h10M1 4.500h2M4 4.500h10M1 7.500h2M4 7.500h10M1 10.500h2M4 10.500h11M1 13.500h2M4 13.500h10" stroke-width="1.100"/><path d="M8.500 7.500v12c0 4 14 4 14 0v-12c0-3.500-14-3.500-14 0zc0 3 14 3 14 0"/></svg>
        </div>
      </div>
      <div class="form">
        <div class="frow gap7"><label>Object type:</label><span class="plain">closed curve</span></div>
        <div class="frow gap9"><label>Name:</label><span class="input"></span></div>
        <div class="frow gap9"><label>Layer:</label><span class="select">Cutting<b><svg><use href="#updown"/></svg></b></span></div>
        <div class="frow gap8"><label>Display Color:</label><span class="select short">By Layer<b><svg><use href="#updown"/></svg></b></span><span class="well"><i style="background:#8746cd"></i></span></div>
        <div class="frow gap6"><label>Face Color:</label><span class="select short dim">From Object<b><svg><use href="#updown"/></svg></b></span><span class="well pale"><i style="background:#000"></i></span></div>
        <div class="frow gap8"><label>Linetype:</label><span class="select">By Layer<b><svg><use href="#updown"/></svg></b></span></div>
        <div class="frow gap8"><label>Print Color:</label><span class="select short">By Layer<b><svg><use href="#updown"/></svg></b></span><span class="well"><i style="background:#8746cd"></i></span></div>
        <div class="frow gap7 tall"><label>Print Width:</label><span class="combo">By Layer<b><svg viewBox="0 0 16 16"><path d="M5 6.800 8 9.800l3-3" fill="none" stroke="#fff" stroke-width="1.600" stroke-linecap="round" stroke-linejoin="round"/></svg></b></span></div>
        <div class="rule"></div>
        <h3>Render Mesh Settings</h3>
        <div class="check off mesh"><i></i>Custom Mesh</div>
        <div class="button">Adjust Settings</div>
        <div class="rule r2"></div>
        <h3>Rendering</h3>
        <div class="check off casts"><i><svg class="gray" viewBox="0 0 12 12"><path d="M3 6.300 5.200 8.800 9.200 2" fill="none" stroke="#aaa" stroke-width="1.600"/></svg></i>Casts shadows</div>
      </div>
    </aside>
  </div>

  <footer class="status">
    <svg width="14" height="10" viewBox="0 0 14 10"><path d="M0 1h1.500M3 1h10M0 5h1.500M3 5h10M0 9h1.500M3 9h10" stroke="#777"/></svg>
    <span class="msg">Undoing GumballTransform</span>
    <span class="units">Millimeters</span>
    <span class="cplane">CPlane<svg><use href="#updown"/></svg></span>
    <span class="x">X: 44.112</span><span class="y">Y: 58.348</span><span class="z">Z: 0.000</span>
  </footer>
</main>
</body>
</html>
```
FILE: styles.css
```css
* { box-sizing: border-box; }
body { margin: 0; width: 1920px; height: 1080px; background: #000; overflow: hidden; font: 11px/16px Inter, sans-serif; color: #232225; }
.defs { display: block; }
i { font-style: normal; display: block; flex: none; }
svg { display: block; flex: none; }
h2, h3, p { margin: 0; font-weight: 400; }

.window { width: 1440px; height: 875px; margin: 84px 0 0 240px; border-radius: 10px; overflow: hidden; display: flex; flex-direction: column; background: #f0ebf2; }

/* title bar */
.titlebar { height: 58px; flex: none; background: #f4eff6; display: grid; grid-template: 28px 30px / 80px 540px 271px 100px 1fr 32px; }
.lights { display: flex; gap: 8px; padding: 8px 0 0 8px; }
.lights i { width: 12px; height: 12px; border-radius: 50%; }
.lights .red { background: radial-gradient(circle, #6d0d08 0 1.800px, #ed6a5f 2.500px); }
.lights .amber { background: #f5bf4f; }
.lights .green { background: #61c555; }
.doc-title { grid-column: 2 / 7; display: flex; align-items: center; padding: 0 0 1px 561px; font-size: 13px; color: #b4b0b6; font-weight: 600; }
.doc-title b { margin: 0 6px 0 5px; color: #434145; font-weight: 700; letter-spacing: -.05px; }
.doc-title span { word-spacing: 2px; letter-spacing: .2px; }
.side-left { grid-row: 2; margin: 2px 0 0 12px; }
.side-right { grid-row: 2; grid-column: 6; margin: 2px 0 0 0; }
.modes { grid-row: 2; grid-column: 2; display: flex; align-items: flex-start; padding-top: 4px; font-size: 12.500px; font-weight: 600; color: #767378; }
.modes span { height: 16px; line-height: 16px; text-align: center; white-space: nowrap; flex: none; }
.modes .on { background: #d1cbd3; border-radius: 4px; color: #454347; }
.modes .grid-snap { width: 73px; } .modes .ortho { width: 85px; } .modes .planar { width: 53px; }
.modes .smart { width: 92px; margin-left: 12px; } .modes .gumball { width: 72px; margin-left: 8px; } .modes .history { width: 82px; }
.layer-tools { grid-row: 2; grid-column: 3; display: flex; gap: 10px; padding: 1px 0 0 212px; align-items: flex-start; }
.layer-tools svg + svg { margin-top: 1px; }
.layer-tools svg + svg + svg { margin-top: 0; }
.layer-tools svg:nth-child(2) { margin-left: 4px; }
.current-layer { grid-row: 2; grid-column: 4 / 6; width: 193px; height: 17px; margin: 3px 0 0 40.500px; border: 1px solid #e8e3ea; border-radius: 4px; display: flex; align-items: center; color: #6d6a6f; }
.current-layer i { width: 15px; height: 14px; margin-left: 2.500px; background: #7f39c8; }
.current-layer span { margin-left: 67px; }

/* tool tabs */
.tabs { height: 17px; flex: none; background: #d4d4d4; border-top: 1px solid #9b9b9b; border-bottom: 1px solid #a2a2a2; display: flex; padding-left: 6px; }
.tabs span { flex: none; height: 15px; line-height: 14px; text-align: center; font-size: 9.500px; font-weight: 700; color: #000; border-right: 1px solid #9c9c9c; box-shadow: 1px 0 #bcbcbc; white-space: nowrap; }
.tabs .active { height: 17px; background: #ebebeb; color: #3b7ef6; border-left: 1px solid #9c9c9c; font-weight: 600; }

/* main toolbar */
.toolbar { height: 31px; flex: none; background: #ebebeb; border-bottom: 1px solid #cfcfcf; display: flex; }
.toolbar i, .tools i { width: 30px; height: 30px; position: relative; }
.toolbar svg, .tools svg { width: 30px; height: 30px; }
.more::after { content: ""; position: absolute; left: 22px; top: 22.500px; border: solid transparent; border-width: 4.500px 2.500px 0; border-top-color: #333; }
.wheel b { display: block; width: 20px; height: 20px; margin: 5px; border-radius: 50%; border: 1px solid #333; background: radial-gradient(circle, #f4f4f4 0 4.500px, #333 5px 5.300px, transparent 6px), conic-gradient(#ff3, #7f3, #2f6, #2ff, #35f, #a3f, #f3c, #f33, #f93, #ff3); }
.help b { display: block; width: 20px; height: 20px; margin: 5px; border-radius: 50%; background: linear-gradient(#5a76e8, #2438ae); color: #fff; font: 700 18px/20px "Liberation Serif", serif; text-align: center; }

.body { flex: 1; min-height: 0; display: flex; }

/* left column */
.left { width: 161px; flex: none; border-right: 1px solid #77777b; display: flex; flex-direction: column; }
.strip, .views { height: 26px; flex: none; background: linear-gradient(#fafafa, #e3e3e3); border-bottom: 1px solid #999; }
.strip { border-bottom-color: #c0c0c0; }
.palette { height: 316px; flex: none; }
.command { width: 143px; height: 20px; margin: 11px 0 8px 8px; background: #fff; border: 1px solid #e6e2e8; border-bottom-color: #bbb8bd; padding-left: 3px; font-size: 13px; line-height: 17px; letter-spacing: .1px; color: #bebcbf; }
.tools { display: grid; grid-template-columns: repeat(5, 30px); }
.snaps { flex: 1; border-top: 2px solid #8b898d; padding-top: 4px; }
.radio { height: 15px; display: flex; align-items: center; padding-left: 18px; }
.radio i { width: 12px; height: 12px; border-radius: 50%; margin-right: 4px; background: #fff; box-shadow: 0 0 1px 0.500px #cfcad2; }
.radio .on, .dot.on { background: radial-gradient(circle, #fff 0 2px, #3b82f8 2.700px); box-shadow: none; }
.check { height: 20px; display: flex; align-items: center; padding-left: 20px; }
.check.first { margin-top: 3px; }
.check i { width: 12px; height: 12px; border-radius: 2.500px; margin-right: 4px; background: #fff; box-shadow: 0 0 1px 0.500px #d3ced6; }
.check .on { background: #3b82f8; box-shadow: none; }
.check svg { width: 12px; height: 12px; }
.off { color: #b3afb5; }
.off i { background: #f6f2f8; box-shadow: 0 0 1px 0.500px #e0dbe3; }
.snaps, .form, .layers { letter-spacing: .07px; }

/* viewport */
.center { width: 778px; flex: none; }
.views { display: flex; align-items: flex-start; padding: 5px 0 0 10px; font-size: 13px; color: #7a7a7a; }
.views .single { margin-left: 16px; margin-right: 14px; }
.views span { height: 14px; line-height: 11px; border-left: 1px solid #777; white-space: nowrap; flex: none; padding-left: 18px; margin-top: 1px; }
.views .sel { color: #3b7ef6; }
.v1 { width: 111px; } .v2 { width: 62px; } .v3, .v4 { width: 72px; } .v5 { width: 90px; }
.viewport { position: relative; height: 715px; background: #9ea2aa; }
.axis { font: 14px Inter, sans-serif; fill: #6c6f74; }
.view-name { position: absolute; left: 1px; top: 1px; width: 31px; height: 19px; background: #1f528e; color: #fff; font-weight: 700; font-size: 11.500px; line-height: 19px; text-align: center; }
.popover { position: absolute; left: 517px; top: 37px; width: 142px; height: 69px; border-radius: 9px; background: #dfdadd; box-shadow: 0 3px 9px rgba(0,0,0,.35), 0 0 1px rgba(0,0,0,.35); font-size: 13px; text-align: center; padding-top: 3px; }
.popover p { letter-spacing: -.05px; }
.popover::before { content: ""; position: absolute; left: -12px; top: 22px; width: 13px; height: 26px; background: #dfdadd; clip-path: polygon(0 50%, 75% 18%, 100% 0, 100% 100%, 75% 82%); }
.value { width: 124px; height: 19px; margin: 7px 0 0 9px; padding-left: 2px; background: #d1cccf; border: 1px solid #c8c3c6; text-align: left; line-height: 17px; letter-spacing: -.1px; }
.value::after { content: ""; display: inline-block; width: 1px; height: 16px; background: #000; vertical-align: -3px; }

/* right column */
.right { flex: 1; border-left: 1px solid #77777b; display: flex; flex-direction: column; overflow: hidden; }
.panel-head { position: relative; height: 59px; flex: none; background: linear-gradient(#fafafa, #dedede); border-bottom: 1px solid #cbcbcb; }
.panel-head h2 { width: 483px; text-align: center; font: 11.500px/24px Inter, sans-serif; letter-spacing: -.37px; }
.gear-btn { position: absolute; right: 2px; top: 4px; width: 28px; height: 16px; border: 1px solid #9c9c9c; border-radius: 4px; background: #f8f8f8; display: flex; align-items: center; padding-left: 4px; gap: 2px; }
.g { width: 11px; height: 11px; } .c { width: 7px; height: 7px; }
.panel-icons { display: flex; gap: 6px; padding: 2px 0 0 145px; }
.panel-icons svg { width: 24px; height: 24px; fill: none; }
.panel-icons svg:not([stroke]) { stroke: #858585; }
.panel-icons.three { padding-left: 205px; }
.layers { height: 294px; flex: none; background: #fff; }
.cols { height: 27px; border-bottom: 1px solid #dedede; display: flex; padding-top: 5px; }
.cols span { width: 23px; height: 16px; border-left: 1px solid #e4e4e4; padding-left: 5px; white-space: nowrap; flex: none; }
.cols .c-name { width: 109px; border: 0; padding-left: 29px; }
.cols .w30 { width: 30px; } .cols .w24 { width: 24px; } .cols .w57 { width: 57px; }
.cols .last { padding-left: 4px; }
.rows { padding: 5px 10px 0; }
.lrow { height: 17px; display: flex; align-items: center; border-radius: 4px; padding-bottom: 1px; }
.cur { background: #dbdbdb; }
.n { width: 104px; padding-left: 17px; flex: none; }
.dot { width: 12px; height: 12px; border-radius: 50%; background: #fff; border: 1px solid #d8d8d8; }
.dot.on { border: 0; }
.ic { width: 14px; height: 16px; margin-left: 10px; }
.lk { margin-left: 9px; }
.cur .ic { opacity: .5; }
.sw { width: 14px; height: 14px; margin-left: 13px; }
.ring { width: 14px; height: 14px; border: 1px solid #222; border-radius: 50%; margin-left: 10px; background: #fcfcfc; }
.lt { width: 42px; margin-left: 13px; } .pw { width: 159px; margin-left: 8px; }
.ud { width: 8px; height: 10px; color: #555; }
.dia { width: 15px; height: 15px; margin-left: 6px; }
.layer-actions { height: 33px; flex: none; border-top: 1px solid #dcd7de; display: flex; padding: 8px 0 0 18px; gap: 16px; }
.pm { display: flex; width: 50px; height: 16px; border: 1px solid #e2dde4; border-radius: 4px; }
.pm svg { width: 24px; height: 14px; }
.pm svg + svg { border-left: 1px solid #e2dde4; }
.pop-btn { width: 32px; height: 16px; border-radius: 4px; background: #fff; box-shadow: 0 .5px 1.500px rgba(0,0,0,.3); display: flex; align-items: center; padding-left: 6px; gap: 4px; }
.props-head { height: 61px; border-top: 2px solid #8b898d; }

.form { flex: 1; min-height: 0; overflow: hidden; }
.frow { height: 16px; display: flex; align-items: center; }
.gap6 { margin-top: 6px; } .gap7 { margin-top: 7px; } .gap8 { margin-top: 8px; } .gap9 { margin-top: 9px; }
.frow label { width: 80.500px; text-align: right; margin-right: 8.500px; flex: none; white-space: nowrap; }
.input { width: 402px; height: 17px; background: #fff; border: 1px solid #e4dfe6; border-bottom-color: #b9b5bb; }
.select, .combo { width: 403px; height: 16px; border-radius: 4px; background: #fff; box-shadow: 0 .5px 1.500px rgba(0,0,0,.3); padding: 0 2px 0 6px; display: flex; align-items: center; justify-content: space-between; flex: none; }
.select.short { width: 359px; }
.select b { width: 12px; height: 12px; border-radius: 3px; background: #3b82f8; color: #fff; padding: 1px 2px; }
.select b svg, .cplane svg { width: 8px; height: 10px; }
.select.dim { background: #f6f2f8; color: #b3afb5; box-shadow: 0 .5px 1.500px rgba(0,0,0,.15); }
.select.dim b { background: none; color: #b3afb5; }
.well { width: 36px; height: 16px; margin-left: 8px; border: 1px solid #a3a0a5; background: #eee; padding: 4px; }
.well i { height: 6px; border: 1px solid #8e8a91; }
.pale { border-color: #cdc9cf; }
.tall { height: 20px; }
.combo { width: 401px; height: 20px; margin-left: 1px; padding: 0 2px 0 3px; }
.combo b { width: 16px; height: 16px; border-radius: 4px; background: #3b82f8; }
.rule { height: 1px; margin: 6px 8px 0; background: #d5d0d8; }
h3 { font-size: 11px; line-height: 16px; padding-left: 8px; margin-top: 3px; }
.mesh { padding-left: 192px; margin-top: 4px; }
.button { width: 96px; height: 16px; margin: 5px 0 0 89px; border-radius: 4px; background: #f6f2f8; color: #b3afb5; text-align: center; line-height: 15px; box-shadow: 0 .5px 1.500px rgba(0,0,0,.15); }
.rule.r2 { margin-top: 4px; }
.casts { padding-left: 192px; margin-top: -1px; }

/* status bar */
.status { height: 28px; flex: none; background: linear-gradient(#dbdbdb, #cfcfcf); display: flex; align-items: center; padding: 1px 0 0 5px; white-space: nowrap; }
.msg { margin-left: 2.500px; width: 908px; }
.units { width: 73.500px; }
.cplane { width: 70px; height: 16px; border: 1px solid #9a9a9a; border-radius: 4px; display: flex; align-items: center; justify-content: space-between; padding: 0 3px 0 4px; }
.cplane svg { color: #888; }
.x { width: 82px; margin-left: 14px; } .y { width: 85px; }
```
